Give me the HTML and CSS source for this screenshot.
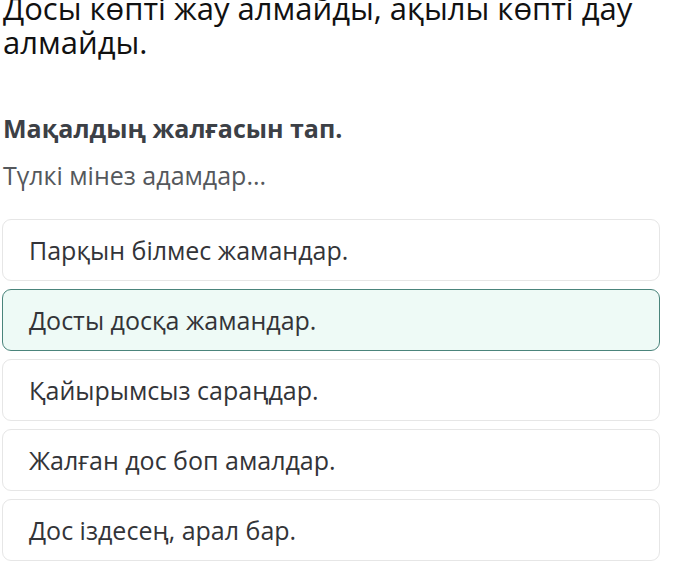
FILE: index.html
```html
<!DOCTYPE html>
<html lang="kk">
<head>
    <meta charset="UTF-8">
    <title>Мақал</title>
    <link rel="stylesheet" href="styles.css">
</head>
<body>
    <h1 class="proverb">Досы көпті жау алмайды, ақылы көпті дау алмайды.</h1>

    <div class="question">
        <p class="task">Мақалдың жалғасын тап.</p>
        <p class="prompt">Түлкі мінез адамдар...</p>
    </div>

    <div class="options">
        <div class="option">Парқын білмес жамандар.</div>
        <div class="option selected">Досты досқа жамандар.</div>
        <div class="option">Қайырымсыз сараңдар.</div>
        <div class="option">Жалған дос боп амалдар.</div>
        <div class="option">Дос іздесең, арал бар.</div>
    </div>
</body>
</html>
```

FILE: styles.css
```css
body { font-family: "Open Sans", "Noto Sans", sans-serif; background: #fff; margin: 0; padding: 0 13px 0 3px; color: #222; }
.proverb { font-size: 31px; font-weight: normal; line-height: 34px; margin: -9px 0 0; color: #111; }
.question { margin-top: 54px; }
.task { font-size: 25px; font-weight: bold; color: #3c4046; margin: 0; line-height: 30px; }
.prompt { font-size: 25px; color: #55585c; margin: 17px 0 0; line-height: 30px; }
.options { margin-top: 29px; display: flex; flex-direction: column; gap: 8px; }
.option {
    height: 60px;
    display: flex;
    align-items: center;
    padding-left: 26px;
    margin-left: -1px;
    border: 1px solid #e6e6e6;
    border-radius: 9px;
    font-size: 25px;
    color: #333438;
}
.option.selected { background: #eefaf6; border-color: #4a847b; }
```
